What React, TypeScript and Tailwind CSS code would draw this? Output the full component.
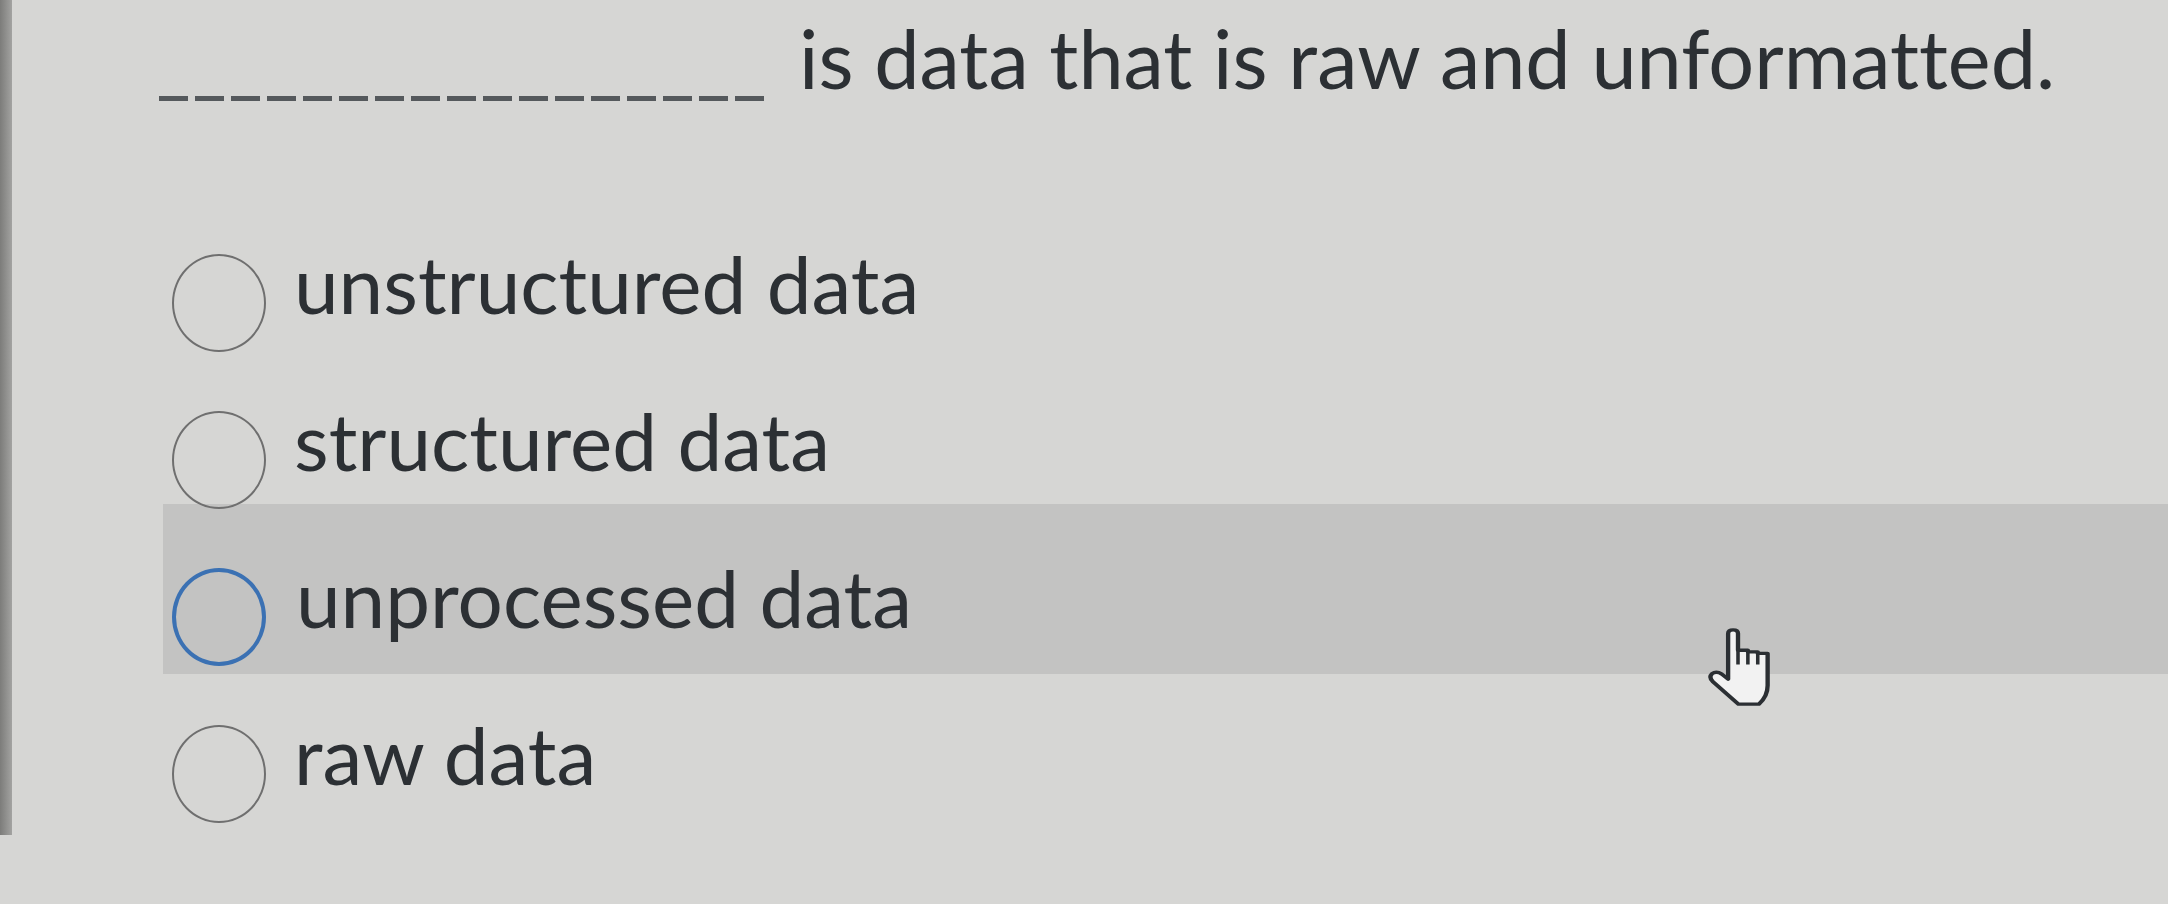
import React from 'react';

const options = [
  { id: 'a', label: 'unstructured data' },
  { id: 'b', label: 'structured data' },
  { id: 'c', label: 'unprocessed data' },
  { id: 'd', label: 'raw data' },
];

function Radio({ focused }: { focused?: boolean }) {
  return (
    <span
      className={
        focused
          ? 'shrink-0 w-[94px] h-[98px] rounded-[50%] border-[4px] border-[#3b71b3]'
          : 'shrink-0 w-[94px] h-[98px] rounded-[50%] border-[2.5px] border-[#6f6f6f]'
      }
    />
  );
}

function HandCursor() {
  return (
    <svg viewBox="0.4 0.4 16.2 25.2" preserveAspectRatio="none" className="w-[64px] h-[78px]" fill="none">
      <path
        d="M6 2.2 Q6 1 7.25 1 Q8.5 1 8.5 2.2 V7.6 H11 V8.1 H13.5 V8.6 H16 V19 Q16 22.5 13.8 25 H8.6 L2.2 17.8 Q1 16.3 1.9 15.2 Q3 14.2 4.4 15.3 L6 16.9 Z"
        fill="#f2f2f2"
        stroke="#2b2f33"
        strokeWidth="1.1"
        strokeLinejoin="round"
      />
      <path d="M8.5 7.6 V12.2 M11 8.1 V12.2 M13.5 8.6 V12.2" stroke="#2b2f33" strokeWidth="0.9" />
    </svg>
  );
}

export default function App() {
  return (
    <div className="relative min-h-screen w-full overflow-hidden flex bg-[#d6d6d4] text-[#2c3034] font-['Lato','Noto_Sans',sans-serif] [font-variant-ligatures:none]">
      {/* dark edge of the window on the left */}
      <div className="w-[12px] h-[835px] shrink-0 bg-gradient-to-r from-[#7c7c7a] to-[#a3a3a1]" />

      <div className="flex-1 flex flex-col pt-[17px]">
        {/* question with blank */}
        <div className="flex items-end ml-[147px]">
          <span className="w-[608px] h-[5px] mb-[-3px] mr-[32px] shrink-0 bg-[repeating-linear-gradient(90deg,#55595c_0_29px,transparent_29px_36px)]" />
          <p className="text-[81px] leading-none whitespace-nowrap">is data that is raw and unformatted.</p>
        </div>

        {/* answer options */}
        <div className="mt-[126px] ml-[151px] flex flex-col">
          {options.map((opt, i) => {
            if (i === 2) {
              return (
                <div
                  key={opt.id}
                  className="-mt-[34px] h-[170px] pt-[56px] pl-[9px] flex items-center gap-[30px] bg-[#c3c3c2]"
                >
                  <Radio focused />
                  <span className="text-[80px] leading-none mb-10 whitespace-nowrap">{opt.label}</span>
                </div>
              );
            }
            return (
              <div
                key={opt.id}
                className={
                  i === 3
                    ? 'relative z-10 mt-[21px] h-[157px] pl-[9px] flex items-center gap-[28px]'
                    : 'relative z-10 h-[157px] pl-[9px] flex items-center gap-[28px]'
                }
              >
                <Radio />
                <span className="text-[80px] leading-none mb-10 whitespace-nowrap">{opt.label}</span>
              </div>
            );
          })}
        </div>
      </div>

      {/* mouse pointer over the page */}
      <div className="absolute left-[1706px] top-[628px] z-20 pointer-events-none">
        <HandCursor />
      </div>
    </div>
  );
}
